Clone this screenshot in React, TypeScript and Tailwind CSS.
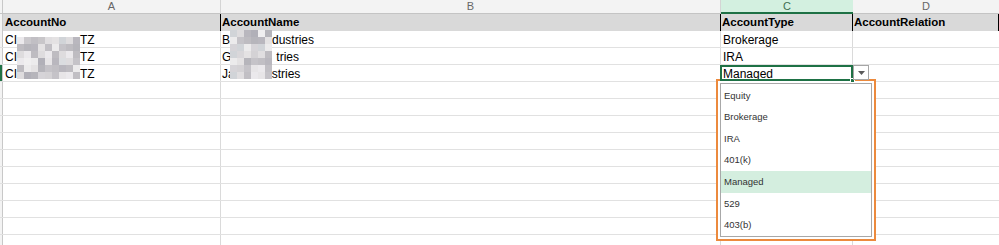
import React from "react";

const font = { fontFamily: '"Liberation Sans", Arial, sans-serif' };

const grays = [
  "#cfcdd1", "#b9b7be", "#e0dee0", "#ebe9ec", "#c5c3c8", "#d6d4d8", "#b1b0b8",
  "#e4e2e3", "#cac8cc", "#dbdde0", "#bebcc1", "#f0eff0", "#d1d4d8", "#c1bfc4",
  "#e7e5e7", "#d4d2d5", "#b6b5bb", "#dedcde", "#c8c6c9", "#ecebec", "#d9d7da",
];

function Mosaic({ cols, rows, seed }: { cols: number; rows: number; seed: number }) {
  const cells = [] as React.ReactNode[];
  for (let r = 0; r < rows; r++) {
    for (let c = 0; c < cols; c++) {
      const i = (r * 7 + c * 5 + seed * 3 + r * c) % grays.length;
      cells.push(<div key={`${r}-${c}`} className="w-[7px] h-[7px]" style={{ background: grays[i] }} />);
    }
  }
  return (
    <div className="grid" style={{ gridTemplateColumns: `repeat(${cols}, 7px)` }}>
      {cells}
    </div>
  );
}

const dataRows: { a: React.ReactNode; b: React.ReactNode; c: string }[] = [
  {
    a: (<><span>CI</span><span className="inline-block w-[63px]" /><span>TZ</span></>),
    b: (<><span>BA</span><span className="inline-block w-[34px]" /><span>dustries</span></>),
    c: "Brokerage",
  },
  {
    a: (<><span>CI</span><span className="inline-block w-[63px]" /><span>TZ</span></>),
    b: (<><span>G</span><span className="inline-block w-[45px]" /><span>tries</span></>),
    c: "IRA",
  },
  {
    a: (<><span>CI</span><span className="inline-block w-[63px]" /><span>TZ</span></>),
    b: (<><span>Ja</span><span className="inline-block w-[37px]" /><span>stries</span></>),
    c: "Managed",
  },
];

const items = ["Equity", "Brokerage", "IRA", "401(k)", "Managed", "529", "403(b)"];

export default function App() {
  const rows = [] as React.ReactNode[];
  for (let i = 0; i < 13; i++) {
    const d = dataRows[i];
    rows.push(
      <div key={i} className="flex h-[17px] border-b border-[#e1e1e1] text-[12px] text-black shrink-0">
        <div className={`w-[3px] border-r border-[#c8c8c8] ${i === 2 ? "bg-[#217346]" : "bg-[#f3f3f3]"}`} />
        <div className="w-[218px] border-r border-[#dadada] pl-[2px] flex items-end pb-[1px] leading-none whitespace-nowrap overflow-hidden">{d ? d.a : null}</div>
        <div className="w-[500px] border-r border-[#dadada] pl-[1px] flex items-end pb-[1px] leading-none whitespace-nowrap overflow-hidden">{d ? d.b : null}</div>
        <div className="w-[132px] border-r border-[#dadada] pl-[2px] flex items-end pb-[1px] leading-none whitespace-nowrap">{d ? d.c : null}</div>
        <div className="w-[146px]" />
      </div>
    );
  }

  return (
    <div className="relative w-[999px] h-[245px] bg-white overflow-hidden" style={font}>
      {/* column letters */}
      <div className="flex h-[14px] bg-[#f3f3f3] border-b border-[#c4c4c4] text-[11px] text-[#666] leading-none">
        <div className="w-[3px] border-r border-[#c8c8c8]" />
        <div className="w-[218px] border-r border-[#d4d4d4] flex items-center justify-center">A</div>
        <div className="w-[500px] border-r border-[#d4d4d4] flex items-center justify-center">B</div>
        <div className="w-[132px] -mb-px border-b-2 border-[#1e7145] bg-[#d3f0e0] text-[#3f6e52] flex items-center justify-center">C</div>
        <div className="w-[146px] flex items-center justify-center">D</div>
      </div>
      {/* header row */}
      <div className="flex h-[17px] bg-[#d9d9d9] text-[11.5px] font-bold text-black leading-none">
        <div className="w-[3px] border-r border-[#c8c8c8] bg-[#f3f3f3]" />
        <div className="w-[218px] border-r border-black pl-[2px] flex items-center">AccountNo</div>
        <div className="w-[500px] border-r border-black pl-[1px] flex items-center">AccountName</div>
        <div className="w-[132px] border-r border-black pl-[1px] flex items-center">AccountType</div>
        <div className="w-[146px] border-r border-black pl-[1px] flex items-center">AccountRelation</div>
      </div>
      {rows}

      {/* redaction mosaics */}
      <div className="absolute left-[17px] top-[37px]">
        <Mosaic cols={9} rows={6} seed={1} />
      </div>
      <div className="absolute left-[230px] top-[30px]">
        <Mosaic cols={6} rows={7} seed={4} />
      </div>

      {/* dropdown list */}
      <div className="absolute left-[716px] top-[79px] w-[160px] h-[162px] border-2 border-[#ec8a3d] bg-white p-[2px]">
        <div className="h-full border border-[#a8a8a8] flex flex-col pt-[1px]">
          {items.map((t) => (
            <div
              key={t}
              className={`h-[21.6px] shrink-0 flex items-center pl-[3px] text-[9.5px] text-[#333] ${t === "Managed" ? "bg-[#d4eedf]" : ""}`}
            >
              {t}
            </div>
          ))}
        </div>
      </div>

      {/* selected cell */}
      <div className="absolute left-[720px] top-[65px] w-[133px] h-[16px] border-2 border-[#1e7145]" />
      <div className="absolute left-[850px] top-[78px] w-[5px] h-[5px] bg-[#1e7145] border border-white" />

      {/* dropdown arrow button */}
      <div className="absolute left-[853px] top-[65px] w-[16px] h-[15px] border border-[#a6a6a6] bg-white flex items-center justify-center">
        <svg width="7" height="4" viewBox="0 0 7 4">
          <path d="M0 0 H7 L3.5 4 Z" fill="#5a5a5a" />
        </svg>
      </div>
    </div>
  );
}
